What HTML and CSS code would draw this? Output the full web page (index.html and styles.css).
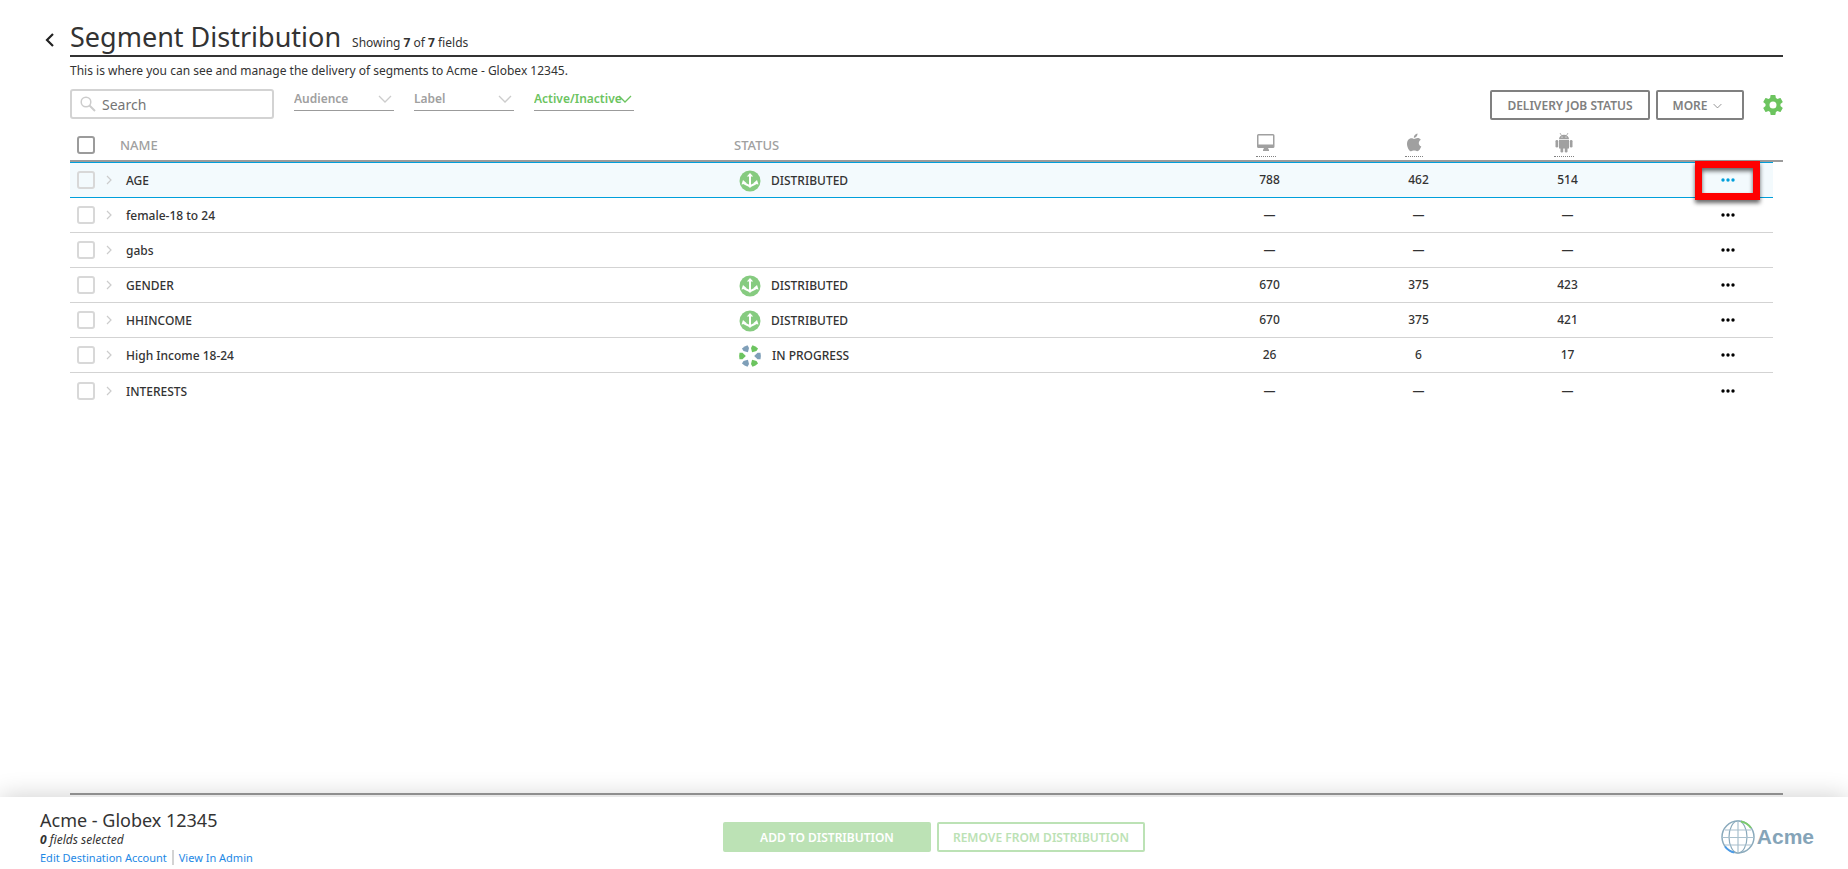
FILE: index.html
```
<!DOCTYPE html>
<html lang="en">

<head>
    <meta charset="UTF-8">
    <meta name="viewport" content="width=device-width, initial-scale=1.0">
    <title>Segment Distribution</title>
    <link rel="stylesheet" href="styles.css">
</head>

<body>
    <!-- shared icons -->
    <svg class="sprite" aria-hidden="true">
        <symbol id="down" viewBox="0 0 14 8"><path d="M1 1l6 6 6-6" fill="none" stroke="currentColor" stroke-width="1.3" /></symbol>
        <symbol id="right" viewBox="0 0 6 10"><path d="M1 1l4 4-4 4" fill="none" stroke="currentColor" stroke-width="1.2" /></symbol>
        <symbol id="dots" viewBox="0 0 14 4"><circle cx="2" cy="2" r="1.7" /><circle cx="7" cy="2" r="1.7" /><circle cx="12" cy="2" r="1.7" /></symbol>
        <symbol id="distributed" viewBox="0 0 22 22">
            <circle cx="11" cy="11" r="10.5" fill="#86cb80" />
            <path d="M11 6v10M5 13c1.500 2 4 1.500 6 3.500 2-2 4.500-1.500 6-3.500" fill="none" stroke="#fff" stroke-width="2" />
            <path d="M11 3l3.200 3.500H7.800zM2.500 14.500l1.500-4.500 4 3.500zM19.500 14.500L18 10l-4 3.500z" fill="#fff" />
        </symbol>
        <symbol id="progress" viewBox="0 0 24 24">
            <g fill="#6cc45f">
                <path id="seg" d="M1.500 8.800h3L7.800 12l-3.300 3.200h-3Q.8 12 1.500 8.800z" />
                <use href="#seg" transform="rotate(120 12 12)" />
                <use href="#seg" transform="rotate(240 12 12)" />
            </g>
            <g fill="#7f9fb8">
                <use href="#seg" transform="rotate(60 12 12)" />
                <use href="#seg" transform="rotate(180 12 12)" />
                <use href="#seg" transform="rotate(300 12 12)" />
            </g>
        </symbol>
    </svg>

    <main class="page">
        <a href="#" class="back" aria-label="Back">
            <svg width="10" height="16" viewBox="0 0 10 16"><path d="M8 2L2 8l6 6" fill="none" stroke="#222" stroke-width="2.200" /></svg>
        </a>
        <section class="content">
            <header class="heading">
                <h1>Segment Distribution</h1>
                <p>Showing <b>7</b> of <b>7</b> fields</p>
            </header>
            <p class="description">This is where you can see and manage the delivery of segments to Acme - Globex 12345.</p>

            <div class="toolbar">
                <label class="search">
                    <svg width="16" height="16" viewBox="0 0 16 16"><g fill="none" stroke="#ccc"><circle cx="6" cy="6" r="4.800" stroke-width="1.500" /><path d="M9.500 9.500l5.500 5.500" stroke-width="2" /></g></svg>
                    <input type="text" name="search" placeholder="Search" aria-label="Search">
                </label>
                <div class="filter">
                    <select name="audience" aria-label="Audience"><option>Audience</option></select>
                    <svg class="arrow"><use href="#down" /></svg>
                </div>
                <div class="filter">
                    <select name="label" aria-label="Label"><option>Label</option></select>
                    <svg class="arrow"><use href="#down" /></svg>
                </div>
                <div class="filter active">
                    <select name="active" aria-label="Active/Inactive"><option>Active/Inactive</option></select>
                    <svg class="arrow"><use href="#down" /></svg>
                </div>
                <div class="actions">
                    <button type="button" class="btn wide">DELIVERY JOB STATUS</button>
                    <button type="button" class="btn more">MORE <svg width="9" height="6"><use href="#down" /></svg></button>
                    <button type="button" class="icon-btn gear" aria-label="Settings">
                        <svg width="20" height="20" viewBox="2 2 20 20"><path fill="#6cc45f" d="M19.430 12.980c.04-.32.07-.64.07-.98s-.03-.66-.07-.98l2.110-1.650c.19-.15.24-.42.12-.64l-2-3.460c-.12-.22-.39-.3-.61-.22l-2.490 1c-.52-.4-1.080-.73-1.690-.98l-.38-2.650A.49.490 0 0 0 14 2h-4c-.25 0-.46.180-.49.420l-.38 2.650c-.61.250-1.170.590-1.690.980l-2.490-1c-.23-.09-.49 0-.61.220l-2 3.460c-.13.220-.07.490.12.640l2.110 1.650c-.04.320-.07.650-.07.980s.03.660.07.980l-2.110 1.650c-.19.150-.24.420-.12.640l2 3.460c.12.220.39.300.61.220l2.490-1c.52.400 1.080.730 1.690.980l.38 2.650c.03.240.24.420.49.420h4c.25 0 .46-.18.49-.42l.38-2.650c.61-.25 1.170-.59 1.690-.98l2.490 1c.23.090.49 0 .61-.22l2-3.460c.12-.22.07-.49-.12-.64zM12 15.500a3.500 3.500 0 1 1 0-7 3.500 3.500 0 0 1 0 7z" /></svg>
                    </button>
                </div>
            </div>

            <table class="segments">
                <colgroup>
                    <col class="col-check"><col class="col-name"><col class="col-status">
                    <col class="col-num"><col class="col-num"><col class="col-num">
                    <col class="col-menu"><col class="col-end">
                </colgroup>
                <thead>
                    <tr>
                        <th><input type="checkbox" aria-label="Select all"></th>
                        <th>NAME</th>
                        <th>STATUS</th>
                        <th class="device"><abbr aria-label="Desktop"><svg width="20" height="20" viewBox="0 0 20 20"><path fill="#a0a0a0" fill-rule="evenodd" d="M2.500 1h14.500a1.500 1.500 0 0 1 1.500 1.500v11a1.500 1.500 0 0 1-1.500 1.500h-5l1 2v1H7v-1l1-2H2.500A1.500 1.500 0 0 1 1 13.500v-11A1.500 1.500 0 0 1 2.500 1zM2.500 2.500v9h14.500v-9z" /></svg></abbr></th>
                        <th class="device"><abbr aria-label="iOS"><svg width="18" height="20" viewBox="0 0 18 20"><g fill="#a0a0a0"><path d="M12.500.5c.2 2.200-1.700 4.300-3.700 4.300C8.600 2.800 10.500.8 12.500.5z" /><path d="M9 6c1 0 2-.9 3.600-.9 1.300 0 2.500.7 3.200 1.700-3 1.800-2.400 5.600.5 6.800-.8 2.100-2.400 4.700-4 4.700-1.200 0-1.600-.7-3.100-.7s-2 .7-3.100.7C4.400 18.300 2 14.500 2 11c0-3.600 2.200-5.700 4.400-5.700C7.600 5.300 8.300 6 9 6z" /></g></svg></abbr></th>
                        <th class="device"><abbr aria-label="Android"><svg width="20" height="20" viewBox="0 0 20 20"><g fill="#a0a0a0"><path d="M5 6.200a5 4.500 0 0 1 10 0z" /><path d="M6 0l1.500 2.500M14 0l-1.500 2.500" stroke="#a0a0a0" stroke-width=".8" /><path d="M5 7h10v8.500H5z" /><rect x="1.500" y="7" width="2.700" height="7.500" rx="1.300" /><rect x="15.800" y="7" width="2.700" height="7.500" rx="1.300" /><rect x="6.500" y="14" width="2.700" height="5.500" rx="1.200" /><rect x="10.800" y="14" width="2.700" height="5.500" rx="1.200" /></g><circle cx="8" cy="4" r=".6" fill="#fff" /><circle cx="12" cy="4" r=".6" fill="#fff" /></svg></abbr></th>
                        <th></th>
                        <th></th>
                    </tr>
                </thead>
                <tbody>
                    <tr class="selected">
                        <td><input type="checkbox" aria-label="AGE"></td>
                        <td class="name"><svg class="expand"><use href="#right" /></svg>AGE</td>
                        <td><span class="status"><svg><use href="#distributed" /></svg>DISTRIBUTED</span></td>
                        <td class="num">788</td>
                        <td class="num">462</td>
                        <td class="num">514</td>
                        <td class="menu"><button type="button" class="icon-btn" aria-label="Actions"><svg class="dots"><use href="#dots" /></svg></button><span class="highlight"></span></td>
                        <td></td>
                    </tr>
                    <tr>
                        <td><input type="checkbox" aria-label="female-18 to 24"></td>
                        <td class="name"><svg class="expand"><use href="#right" /></svg>female-18 to 24</td>
                        <td></td>
                        <td class="num">—</td>
                        <td class="num">—</td>
                        <td class="num">—</td>
                        <td class="menu"><button type="button" class="icon-btn" aria-label="Actions"><svg class="dots"><use href="#dots" /></svg></button></td>
                        <td></td>
                    </tr>
                    <tr>
                        <td><input type="checkbox" aria-label="gabs"></td>
                        <td class="name"><svg class="expand"><use href="#right" /></svg>gabs</td>
                        <td></td>
                        <td class="num">—</td>
                        <td class="num">—</td>
                        <td class="num">—</td>
                        <td class="menu"><button type="button" class="icon-btn" aria-label="Actions"><svg class="dots"><use href="#dots" /></svg></button></td>
                        <td></td>
                    </tr>
                    <tr>
                        <td><input type="checkbox" aria-label="GENDER"></td>
                        <td class="name"><svg class="expand"><use href="#right" /></svg>GENDER</td>
                        <td><span class="status"><svg><use href="#distributed" /></svg>DISTRIBUTED</span></td>
                        <td class="num">670</td>
                        <td class="num">375</td>
                        <td class="num">423</td>
                        <td class="menu"><button type="button" class="icon-btn" aria-label="Actions"><svg class="dots"><use href="#dots" /></svg></button></td>
                        <td></td>
                    </tr>
                    <tr>
                        <td><input type="checkbox" aria-label="HHINCOME"></td>
                        <td class="name"><svg class="expand"><use href="#right" /></svg>HHINCOME</td>
                        <td><span class="status"><svg><use href="#distributed" /></svg>DISTRIBUTED</span></td>
                        <td class="num">670</td>
                        <td class="num">375</td>
                        <td class="num">421</td>
                        <td class="menu"><button type="button" class="icon-btn" aria-label="Actions"><svg class="dots"><use href="#dots" /></svg></button></td>
                        <td></td>
                    </tr>
                    <tr>
                        <td><input type="checkbox" aria-label="High Income 18-24"></td>
                        <td class="name"><svg class="expand"><use href="#right" /></svg>High Income 18-24</td>
                        <td><span class="status progress"><svg><use href="#progress" /></svg>IN PROGRESS</span></td>
                        <td class="num">26</td>
                        <td class="num">6</td>
                        <td class="num">17</td>
                        <td class="menu"><button type="button" class="icon-btn" aria-label="Actions"><svg class="dots"><use href="#dots" /></svg></button></td>
                        <td></td>
                    </tr>
                    <tr>
                        <td><input type="checkbox" aria-label="INTERESTS"></td>
                        <td class="name"><svg class="expand"><use href="#right" /></svg>INTERESTS</td>
                        <td></td>
                        <td class="num">—</td>
                        <td class="num">—</td>
                        <td class="num">—</td>
                        <td class="menu"><button type="button" class="icon-btn" aria-label="Actions"><svg class="dots"><use href="#dots" /></svg></button></td>
                        <td></td>
                    </tr>
                </tbody>
            </table>
        </section>
    </main>

    <footer class="footer">
        <div class="account">
            <h2>Acme - Globex 12345</h2>
            <p><b>0</b> fields selected</p>
            <nav>
                <a href="#">Edit Destination Account</a>
                <a href="#">View In Admin</a>
            </nav>
        </div>
        <div class="footer-buttons">
            <button type="button" class="btn add">ADD TO DISTRIBUTION</button>
            <button type="button" class="btn remove">REMOVE FROM DISTRIBUTION</button>
        </div>
        <div class="logo">
            <svg width="34" height="36" viewBox="0 0 34 36" fill="none" stroke="#8aaabc" stroke-width="1.200">
                <circle cx="17" cy="18" r="16" stroke-width="1.500" />
                <ellipse cx="17" cy="18" rx="9" ry="16" />
                <path d="M17 2v32M4 11h26M1 18.500h32M4 26h26" stroke="#a9c0cd" />
                <path d="M20 2.500a16 16 0 0 1 10 6.500" stroke="#7ccb6c" stroke-width="2" />
                <path d="M4 27.500a16 16 0 0 0 9 6" stroke="#4a9be8" stroke-width="2" />
            </svg>
            Acme
        </div>
    </footer>
</body>

</html>
```
FILE: styles.css
```
* {
    box-sizing: border-box;
    margin: 0;
    padding: 0;
}

body {
    display: flex;
    flex-direction: column;
    min-height: 100vh;
    font-family: "Noto Sans", sans-serif;
    font-size: 12px;
    line-height: 16px;
    color: #333;
    background: #fff;
}

svg {
    display: block;
    flex: none;
}

button,
input,
select {
    font: inherit;
}

a {
    color: #1e88e5;
    text-decoration: none;
}

.sprite {
    position: absolute;
    width: 0;
    height: 0;
}

/* page */

.page {
    flex: 1;
    display: flex;
    padding: 16px 65px 2px 45px;
}

.back {
    width: 25px;
    padding-top: 16px;
}

.content {
    flex: 1;
    border-bottom: 2px solid #9b9b9b;
}

.heading {
    display: flex;
    align-items: baseline;
    gap: 11px;
    height: 41px;
    border-bottom: 2px solid #333;
}

.heading h1 {
    font-size: 27px;
    line-height: 42px;
    font-weight: 400;
}

.description {
    padding-top: 6px;
    height: 32px;
}

/* toolbar */

.toolbar {
    display: flex;
    align-items: flex-start;
    gap: 20px;
    height: 40px;
}

.search {
    display: flex;
    align-items: center;
    gap: 6px;
    width: 204px;
    height: 30px;
    padding-left: 8px;
    border: 2px solid #d3d3d3;
    border-radius: 3px;
}

.search input {
    flex: 1;
    min-width: 0;
    padding-top: 2px;
    border: none;
    outline: none;
    background: none;
    font-size: 14px;
}

.search input::placeholder {
    color: #757575;
}

.filter {
    position: relative;
    width: 100px;
    height: 22px;
    border-bottom: 1px solid #9b9b9b;
    color: #a0a0a0;
}

.filter select {
    width: 100%;
    padding-top: 1px;
    appearance: none;
    border: none;
    outline: none;
    background: none;
    color: inherit;
    font-weight: 600;
    line-height: 18px;
}

.filter .arrow {
    position: absolute;
    top: 6px;
    right: 2px;
    width: 14px;
    height: 8px;
    color: #ccc;
    pointer-events: none;
}

.filter.active,
.filter.active .arrow {
    color: #6cc45f;
}

.actions {
    display: flex;
    align-items: center;
    gap: 6px;
    margin-left: auto;
    padding-top: 1px;
}

.btn {
    display: flex;
    align-items: center;
    justify-content: center;
    height: 30px;
    padding-top: 1px;
    border: 2px solid #808080;
    border-radius: 2px;
    background: #fff;
    color: #808080;
    font-weight: 600;
}

.wide {
    width: 160px;
}

.more {
    gap: 5px;
    width: 88px;
    padding-right: 6px;
}

.icon-btn {
    display: block;
    border: none;
    background: none;
}

.gear {
    margin-left: 13px;
}

/* table */

.segments {
    width: 100%;
    table-layout: fixed;
    border-collapse: separate;
    border-spacing: 0;
}

.col-check {
    width: 50px;
}

.col-status {
    width: 461px;
}

.col-num {
    width: 149px;
}

.col-menu {
    width: 131px;
}

.col-end {
    width: 10px;
}

.segments th {
    height: 33px;
    padding-top: 1px;
    border-bottom: 2px solid #9b9b9b;
    color: #a0a0a0;
    font-size: 13px;
    font-weight: 500;
    text-align: left;
}

.segments th.device {
    padding-left: 61px;
}

.device abbr {
    display: inline-block;
    padding-bottom: 3px;
    border-bottom: 1px dotted #808080;
    vertical-align: middle;
}

.segments td {
    height: 35px;
    border-bottom: 1px solid #d3d3d3;
    font-weight: 500;
}

.segments .name {
    padding-top: 2px;
}

.segments td:last-child,
.segments tr:last-child td {
    border-bottom: none;
}

.segments .selected td:not(:last-child) {
    height: 36px;
    border-top: 1px solid #009fdb;
    border-bottom: 1px solid #009fdb;
    background: #f3fafd;
}

.segments input {
    display: block;
    width: 18px;
    height: 18px;
    margin-left: 7px;
    appearance: none;
    border: 2px solid #d8d8d8;
    border-radius: 3px;
}

.segments th input {
    border-color: #9b9b9b;
}

.expand {
    display: inline-block;
    width: 6px;
    height: 10px;
    margin-left: -14px;
    margin-right: 14px;
    color: #ccc;
}

.status {
    display: flex;
    align-items: center;
    gap: 10px;
    padding-top: 1px;
    padding-left: 5px;
}

.status svg {
    width: 22px;
    height: 22px;
}

.status.progress {
    padding-left: 4px;
}

.status.progress svg {
    width: 24px;
    height: 24px;
}

.segments .num {
    text-align: center;
}

.menu {
    position: relative;
    padding-left: 79px;
}

.dots {
    width: 14px;
    height: 4px;
    fill: #000;
}

.selected .dots {
    fill: #009fdb;
}

.highlight {
    position: absolute;
    top: -2px;
    right: 13px;
    width: 65px;
    height: 39px;
    border: 7px solid #f00;
    filter: drop-shadow(0 3px 2px rgba(0, 0, 0, 0.6));
    pointer-events: none;
}

/* footer */

.footer {
    display: grid;
    grid-template-columns: 1fr auto 1fr;
    align-items: center;
    height: 72px;
    padding: 8px 34px 0 40px;
    background: #fff;
    box-shadow: 0 0 26px rgba(0, 0, 0, 0.2);
}

.account {
    padding-bottom: 2px;
}

.account h2 {
    font-size: 18px;
    line-height: 24px;
    font-weight: 400;
}

.account p {
    font-style: italic;
}

.account nav {
    display: flex;
    font-size: 11px;
    line-height: 15px;
    padding-top: 2px;
}

.account a + a {
    margin-left: 5px;
    padding-left: 5px;
    border-left: 2px solid #d3d3d3;
}

.footer-buttons {
    display: flex;
    gap: 6px;
    margin-left: 14px;
}

.footer-buttons .btn {
    width: 208px;
    border-color: #bce2b5;
}

.footer-buttons .add {
    background: #bce2b5;
    color: #fff;
}

.footer-buttons .remove {
    color: #bce2b5;
}

.logo {
    display: flex;
    align-items: center;
    justify-content: flex-end;
    gap: 2px;
    color: #85a4b8;
    font: bold 21px "Liberation Sans", sans-serif;
}
```
